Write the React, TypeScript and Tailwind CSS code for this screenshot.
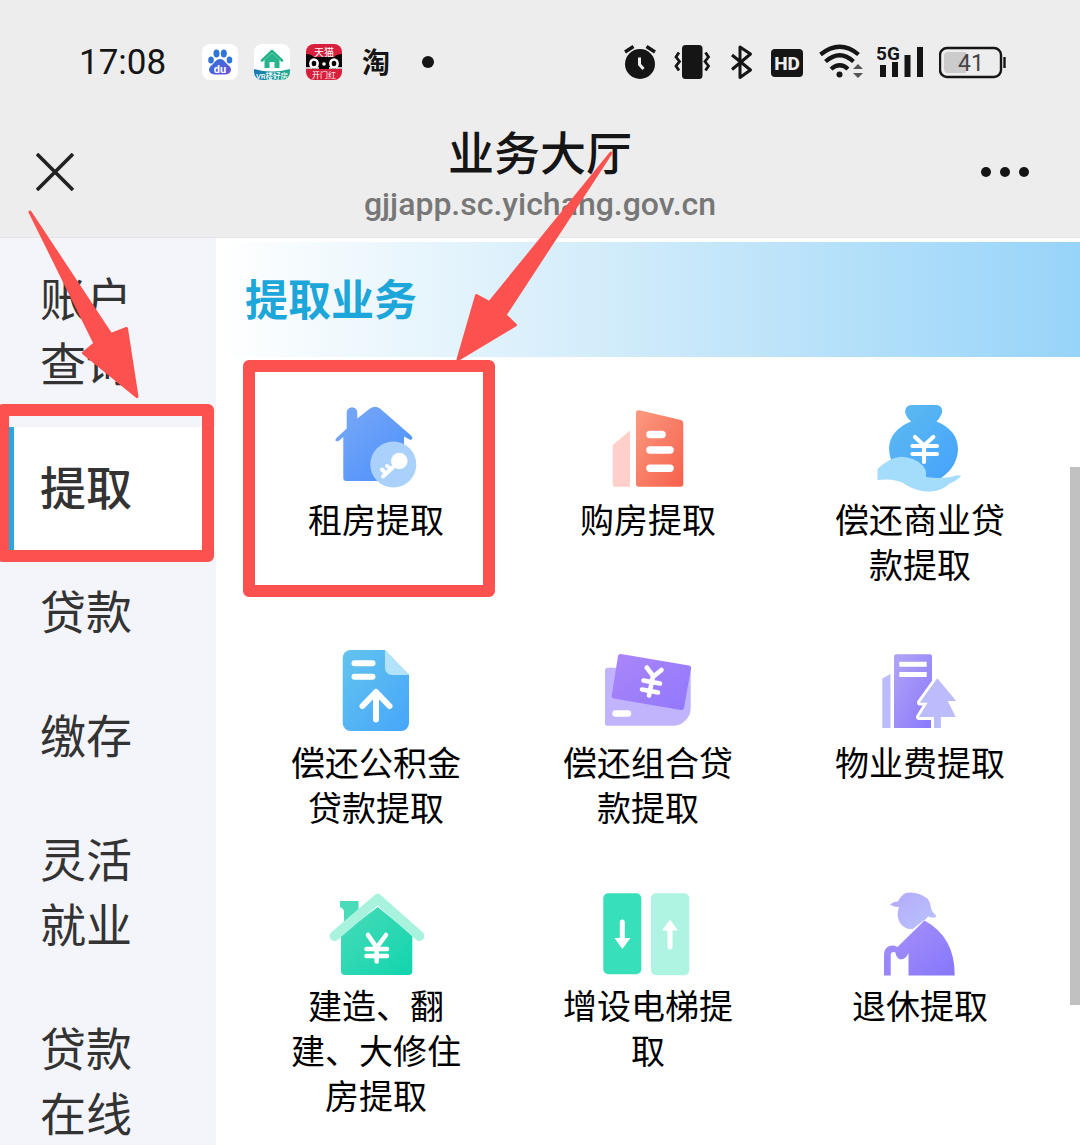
import React from 'react';

const HIGHLIGHT = 'pointer-events-none absolute z-10 rounded-md border-[12px] border-[#fb5250]';

function BaiduTile() {
  return (
    <svg viewBox="202 44 36 36" className="size-9" aria-label="百度">
      <defs>
        <linearGradient id="paw" x1="0" x2="1" y1="0" y2="1">
          <stop offset="0" stopColor="#2f74d8" />
          <stop offset="1" stopColor="#6a4fdc" />
        </linearGradient>
      </defs>
      <rect x="202" y="44" width="36" height="36" rx="8" fill="#fff" />
      <ellipse cx="211" cy="60" rx="2.8" ry="3.6" fill="#2f74d8" />
      <ellipse cx="216.5" cy="53.5" rx="3" ry="4" fill="#2f74d8" />
      <ellipse cx="223.8" cy="53.5" rx="3" ry="4" fill="#2f74d8" />
      <ellipse cx="229.5" cy="60" rx="2.8" ry="3.6" fill="#2f74d8" />
      <path d="M220 59c4 0 5 3.200 7.500 5.500 3.200 2.600 4.300 4.500 3 7-1.500 3.500-6 3-10.500 3s-9 .500-10.500-3c-1.300-2.500-.2-4.400 3-7 2.500-2.300 3.500-5.500 7.500-5.500z" fill="url(#paw)" />
      <text x="220" y="73" textAnchor="middle" fontSize="11" fontWeight="700" fill="#fff">du</text>
    </svg>
  );
}

function HouseTile() {
  return (
    <svg viewBox="254 44 36 36" className="size-9" aria-label="VR">
      <defs>
        <clipPath id="houseTile"><rect x="254" y="44" width="36" height="36" rx="8" /></clipPath>
        <linearGradient id="houseBand" x1="0" x2="1"><stop offset="0" stopColor="#1878b4" /><stop offset="1" stopColor="#1fb08c" /></linearGradient>
      </defs>
      <g clipPath="url(#houseTile)">
        <rect x="254" y="44" width="36" height="36" fill="#fff" />
        <path d="M254 69q18 5 36 0v12h-36z" fill="url(#houseBand)" />
        <path d="M262 60.500 272 51 282 60.500" fill="none" stroke="#27b48c" strokeWidth="2.600" strokeLinecap="round" strokeLinejoin="round" />
        <path d="M264.500 60 272 53 279.500 60V68H274.500V62H269.500V68H264.500z" fill="#27b48c" />
        <text x="272" y="79" textAnchor="middle" fontSize="7.500" fontWeight="500" fill="#fff">VR楼好房</text>
      </g>
    </svg>
  );
}

function TmallTile() {
  return (
    <svg viewBox="306 44 36 36" className="size-9" aria-label="天猫">
      <defs><clipPath id="catTile"><rect x="306" y="44" width="36" height="36" rx="8" /></clipPath></defs>
      <g clipPath="url(#catTile)">
        <rect x="306" y="44" width="36" height="36" fill="#d81f3c" />
        <path d="M306 54q5 0 8 3h20q3-3 8-3v15h-36z" fill="#0c0507" />
        <text x="324" y="55.500" textAnchor="middle" fontSize="10" fill="#fff">天猫</text>
        <g fill="none" stroke="#fff" strokeWidth="2.600"><ellipse cx="314" cy="63.500" rx="3.600" ry="4" /><ellipse cx="334" cy="63.500" rx="3.600" ry="4" /></g>
        <circle cx="324" cy="64" r="1.800" fill="#fff" />
        <path d="M306 68h6M316 68h3M329 68h3M336 68h6" stroke="#fff" strokeWidth="1.400" />
        <text x="324" y="78" textAnchor="middle" fontSize="8" fill="#fff">开门红</text>
      </g>
    </svg>
  );
}

function StatusIcons() {
  return (
    <div className="flex items-center gap-[14px] text-[#151515]">
      <svg viewBox="624 40 35 44" className="h-11 w-[35px]" aria-label="闹钟">
        <circle cx="640" cy="64" r="15" fill="currentColor" />
        <path d="M625 52 633.500 46.500M655 52 646.500 46.500" stroke="currentColor" strokeWidth="3.500" />
        <path d="M639.500 57.500V64.500L643.500 69" fill="none" stroke="#ededed" strokeWidth="3" />
      </svg>
      <svg viewBox="673 40 41 44" className="h-11 w-[41px]" aria-label="振动">
        <rect x="682" y="45" width="20.500" height="34" rx="3.500" fill="currentColor" />
        <path d="M679 52.500 676 57 679.500 61.500 676 66 679 70.500M705.500 52.500 708.500 57 705 61.500 708.500 66 705.500 70.500" fill="none" stroke="currentColor" strokeWidth="2.800" />
      </svg>
      <svg viewBox="728 40 29 44" className="h-11 w-[29px]" aria-label="蓝牙">
        <path d="M732 55 750.500 70 740 77.500V47L750.500 54 732 69.500" fill="none" stroke="currentColor" strokeWidth="3" strokeLinejoin="round" />
      </svg>
      <svg viewBox="771 40 34 44" className="h-11 w-[34px]" aria-label="HD">
        <rect x="771" y="49" width="32" height="28" rx="4" fill="currentColor" />
        <text x="787" y="70" textAnchor="middle" fontSize="19" fontWeight="800" fill="#ededed" fontFamily="Roboto, sans-serif">HD</text>
      </svg>
      <svg viewBox="819 40 44 44" className="h-11 w-11" aria-label="Wi-Fi">
        <g fill="none" stroke="currentColor" strokeWidth="4.200">
          <path d="M820.500 54.500Q840 39 858.500 54.500" />
          <path d="M825.500 61.500Q840 49 853.500 61.500" />
          <path d="M831 69Q840 61.500 848 69" />
        </g>
        <circle cx="839.500" cy="74.500" r="3" fill="currentColor" />
        <path d="M853 69 858 64 863 69zM853 73 858 78 863 73z" fill="#555" />
      </svg>
      <svg viewBox="877 40 48 44" className="h-11 w-12" aria-label="5G 信号">
        <text x="876" y="60" fontSize="19" fontWeight="700" fill="currentColor" fontFamily="Roboto, sans-serif">5G</text>
        <path d="M880 65h6v12h-6zM892 62h6v15h-6zM904.500 55h6v22h-6zM917 47h6v30h-6z" fill="currentColor" />
      </svg>
      <svg viewBox="939 40 68 44" className="h-11 w-[68px]" aria-label="电量 41%">
        <rect x="940" y="48" width="61" height="29" rx="7" fill="none" stroke="currentColor" strokeWidth="2.400" />
        <path d="M948 52h18v21h-18a4 4 0 0 1-4-4v-13a4 4 0 0 1 4-4z" fill="#cbcbcb" />
        <path d="M1004.500 57v11" stroke="currentColor" strokeWidth="2.400" />
        <text x="971" y="71" textAnchor="middle" fontSize="23" fill="#444" fontFamily="Roboto, sans-serif">41</text>
      </svg>
    </div>
  );
}

function Gradient({ id, from, to }: { id: string; from: string; to: string }) {
  return (
    <defs>
      <linearGradient id={id} x1="0" y1="0" x2="1" y2="1">
        <stop offset="0" stopColor={from} />
        <stop offset="1" stopColor={to} />
      </linearGradient>
    </defs>
  );
}

const rentIcon = (
  <>
    <Gradient id="rent" from="#7aa9f6" to="#4a8ffd" />
    <path d="M10 37.500 20.700 27.500V11.500a5.300 5.300 0 0 1 10.600 0V17.500L44 7.500Q49 4 54 7.500L85 34.500Q88 38 84.500 39L78 35.500V80H20.300a3 3 0 0 1-3-3V36L12.500 40Q8 41 10 37.500z" fill="url(#rent)" />
    <circle cx="67.300" cy="63.500" r="23" fill="#a9d1fc" />
    <circle cx="73.300" cy="60" r="8.300" fill="#fff" />
    <path d="M70 63.500 57 75.500M60 72.500 56 68.500M65 68 61 65" stroke="#fff" strokeWidth="4" strokeLinecap="round" />
  </>
);

const buyIcon = (
  <>
    <Gradient id="buy" from="#fb9a80" to="#f6604c" />
    <path d="M14.700 44 32 29.500V85.700H17a2.300 2.300 0 0 1-2.300-2.300z" fill="#ffcfcb" />
    <path d="M38 12Q38 8.500 41.500 9.300L83 19Q85.300 19.800 85.300 22V83a2.700 2.700 0 0 1-2.700 2.700H40.700A2.700 2.700 0 0 1 38 83z" fill="url(#buy)" />
    <path d="M52 33.500H64M52 49H72M52 67.300H72" stroke="#fff" strokeWidth="7.500" strokeLinecap="round" />
  </>
);

const bagIcon = (
  <>
    <Gradient id="bag" from="#5dbcf0" to="#46a2fc" />
    <path d="M41 4H67Q73 5 72 12 70 17 66.500 20.500 88 29 88 49 87 66 71 77H40Q19 67 19 47 20 29 41 20.500 36 16 35 11 35 5 41 4z" fill="url(#bag)" />
    <path d="M45 36 54 44.500 63.300 36M54 44V61M42.500 45H67M42.500 53H67" fill="none" stroke="#fff" strokeWidth="4.200" strokeLinecap="round" />
    <path d="M7.500 68Q20 56 31 55.700 44 56 52 64 57 68 56 76 72 78 83 75.500 89 73 91 75.500 86 80 79 83 73 89 62 90.500 48 91 37 84.500 27 77 7.500 79z" fill="#a4dcfc" />
  </>
);

const fundIcon = (
  <>
    <Gradient id="fund" from="#63c4ee" to="#47a6fa" />
    <path d="M24.700 6H59L83 31V79a8 8 0 0 1-8 8H24.700a8 8 0 0 1-8-8V14a8 8 0 0 1 8-8z" fill="url(#fund)" />
    <path d="M59 6 83 31H66a7 7 0 0 1-7-7z" fill="#b2e3fb" />
    <path d="M28.500 19.300H46.500M28.500 32.700H46.500" stroke="#fff" strokeWidth="6" strokeLinecap="round" />
    <path d="M36.500 62 50 48 63.500 62M50 49V75.500" fill="none" stroke="#fff" strokeWidth="6" strokeLinecap="round" strokeLinejoin="round" />
  </>
);

const comboIcon = (
  <>
    <Gradient id="combo" from="#ab86fa" to="#9178fb" />
    <path d="M10 23.700H92.700V64A18 18 0 0 1 75 81.700H9.500A2.500 2.500 0 0 1 7 79.200V26.700a3 3 0 0 1 3-3z" fill="#c1b4fd" />
    <path d="M20 12Q20.500 9.500 23 10L91 21.500Q93.500 22 93 24.500L86 64Q85.500 66.500 83 66L15.500 54.500Q13.300 54 13.700 52z" fill="url(#combo)" />
    <path d="M48.700 23.500 55.500 32.500 63.500 26M55 32 51 51.500M45.500 36.500 62 39.500M44 45.500 60 48.500" fill="none" stroke="#fff" strokeWidth="4.600" strokeLinecap="round" />
    <path d="M17.500 69.500H30" stroke="#fff" strokeWidth="6.400" strokeLinecap="round" />
  </>
);

const propertyIcon = (
  <>
    <Gradient id="property" from="#b0a5f6" to="#8a78fb" />
    <path d="M12.300 34.500 20.500 30V84H12.300z" fill="#bdbcfb" />
    <path d="M26 10.300H60a2 2 0 0 1 2 2V84H24V12.300a2 2 0 0 1 2-2z" fill="url(#property)" />
    <path d="M29.300 20.200H56.700M29.300 30.500H56.700" stroke="#fff" strokeWidth="5" />
    <path d="M67.300 34.500 86 57H77.500L85.500 73H70.700V84H64V73H49L58 58.500H50z" fill="#bdbcfb" stroke="#fff" strokeWidth="6" strokeLinejoin="round" paintOrder="stroke" />
    <path d="M67.300 34.500 86 57H77.500L85.500 73H70.700V84H64V73H49L58 58.500H50z" fill="#bdbcfb" />
  </>
);

const buildIcon = (
  <>
    <Gradient id="build" from="#4adbb9" to="#10d5ad" />
    <path d="M14 14H32.500V26L18 40V24Q17 21 14 20z" fill="#4adbb9" />
    <path d="M51.700 20 86.300 48V84a4 4 0 0 1-4 4H19a4 4 0 0 1-4-4V48z" fill="url(#build)" />
    <path d="M8.500 49 51.700 12 93.300 49" fill="none" stroke="#a8f2de" strokeWidth="10" strokeLinecap="round" strokeLinejoin="round" />
    <path d="M42 48 50.700 60.500 60 48M50.700 60V74.500M40.500 62H61M40.500 69H61" fill="none" stroke="#fff" strokeWidth="4.600" strokeLinecap="round" />
  </>
);

const elevatorIcon = (
  <>
    <rect x="5.300" y="6.300" width="38" height="81" rx="5" fill="#37dfba" />
    <rect x="53" y="6.300" width="38.300" height="82" rx="5" fill="#aff4e2" />
    <path d="M24.300 35V54M72 60V42" stroke="#fff" strokeWidth="5" strokeLinecap="round" />
    <path d="M16.500 51H32.500L24.300 62zM64 43.500H80L72 32.500z" fill="#fff" />
  </>
);

const retireIcon = (
  <>
    <Gradient id="retire" from="#a992fa" to="#8677fb" />
    <Gradient id="retireHead" from="#b5a9fa" to="#b9c4fe" />
    <path d="M20 17.500Q24 14 28 14.500 31 8 36 6 47 4 58 12 61 17 61.500 23 63 26 66.500 29 65 32 58 29.500 56 33 53 34L43 42Q34 43 29.500 35 26 28 29 20 24 20.500 20 17.500z" fill="url(#retireHead)" />
    <path d="M54.500 33.500Q85 50 84.700 88.500H38.500V66Q36 72 30.500 72.500 26 71 25.500 65.500 21 64 20.700 68V88.500H14V68Q14 58 24 58.500L27.500 60z" fill="url(#retire)" />
  </>
);

const services = [
  { label: '租房提取', icon: rentIcon, highlighted: true },
  { label: '购房提取', icon: buyIcon },
  { label: '偿还商业贷款提取', icon: bagIcon },
  { label: '偿还公积金贷款提取', icon: fundIcon },
  { label: '偿还组合贷款提取', icon: comboIcon },
  { label: '物业费提取', icon: propertyIcon },
  { label: '建造、翻建、大修住房提取', icon: buildIcon },
  { label: '增设电梯提取', icon: elevatorIcon },
  { label: '退休提取', icon: retireIcon },
];

const categories = ['账户查询', '提取', '贷款', '缴存', '灵活就业', '贷款在线'];

export default function App() {
  return (
    <div className="relative flex h-screen flex-col overflow-hidden bg-white font-['Roboto','Noto_Sans_CJK_SC',sans-serif]">
      <header className="shrink-0 border-b border-[#e4e5e7] bg-[#ededed] pt-10 text-[#151515]">
        <div className="flex h-11 items-center justify-between pr-[73px] pl-[79px]">
          <div className="flex items-center">
            <time className="w-[123px] pt-0.5 text-[35px] leading-10">17:08</time>
            <div className="flex items-center gap-4">
              <BaiduTile />
              <HouseTile />
              <TmallTile />
            </div>
            <span className="ml-5 pt-1 text-[28px] leading-9 font-bold">淘</span>
            <span className="ml-8 size-3 rounded-full bg-[#151515]" />
          </div>
          <StatusIcons />
        </div>
        <div className="mt-[22px] grid h-[131px] grid-cols-[1fr_auto_1fr] items-center px-9">
          <button type="button" aria-label="关闭" className="justify-self-start">
            <svg viewBox="0 0 38 38" className="size-[38px]"><path d="M1 1 37 37M37 1 1 37" stroke="#222" strokeWidth="3.600" /></svg>
          </button>
          <div className="pt-2.5 text-center">
            <h1 className="text-[46px] leading-[52px] font-medium">业务大厅</h1>
            <p className="mt-0.5 text-[32px] leading-11 font-medium text-[#777]">gjjapp.sc.yichang.gov.cn</p>
          </div>
          <button type="button" aria-label="更多" className="mr-[15px] flex gap-[9px] justify-self-end">
            <span className="size-2.5 rounded-full bg-[#151515]" />
            <span className="size-2.5 rounded-full bg-[#151515]" />
            <span className="size-2.5 rounded-full bg-[#151515]" />
          </button>
        </div>
      </header>

      <div className="flex min-h-0 flex-1">
        <nav className="w-1/5 shrink-0 bg-[#f4f5fa]">
          {categories.map((name) => {
            const active = name === '提取';
            return (
              <div key={name} className="relative">
                <button
                  type="button"
                  className={
                    active
                      ? 'block w-full border-l-[14px] border-[#2aa8dc] bg-white pt-[30px] pr-16 pb-[29px] pl-[26px] text-left text-[46px] leading-[65px] font-medium text-[#333]'
                      : 'block w-full pt-[30px] pr-16 pb-[29px] pl-10 text-left text-[46px] leading-[65px] text-[#333]'
                  }
                >
                  {name}
                </button>
                {active && <div className={`${HIGHLIGHT} -top-[23px] right-[2px] -bottom-[11px] -left-[3px]`} />}
              </div>
            );
          })}
        </nav>

        <main className="relative min-w-0 flex-1 pt-1">
          <h2 className="bg-linear-to-r from-white via-[#cdeafa] to-[#97d4f9] pt-7 pb-6 pl-[29px] text-[43px] leading-[63px] font-bold text-[#1ca6d9]">
            提取业务
          </h2>
          <div className="grid auto-rows-[243px] grid-cols-3 px-6 pt-11">
            {services.map((service) => (
              <div key={service.label} className="relative flex justify-center">
                <button type="button" className="flex w-[184px] flex-col items-center justify-start gap-0.5 text-[34px] leading-[45px] text-black">
                  <svg viewBox="0 0 100 96" className="h-24 w-[100px] shrink-0" aria-hidden="true">{service.icon}</svg>
                  <span>{service.label}</span>
                </button>
                {service.highlighted && <div className={`${HIGHLIGHT} -top-[41px] right-[17px] bottom-[47px] left-[3px]`} />}
              </div>
            ))}
          </div>
          <div className="absolute top-[229px] right-0 h-[538px] w-2.5 bg-[#c1c1c1]" />
        </main>
      </div>

      <svg viewBox="0 0 640 420" className="pointer-events-none absolute top-0 left-0 z-20 h-[420px] w-[640px]" aria-hidden="true">
        <g fill="#fb5250" stroke="#fb5250" strokeWidth="3" strokeLinejoin="round">
          <path d="M30 212 111 334.500 126.500 328.500 137 396.500 83.500 353 95 343.500z" />
          <path d="M611 153 505 315 515.500 325 458 359.500 476.500 295.500 489.500 302.500z" />
        </g>
      </svg>
    </div>
  );
}
